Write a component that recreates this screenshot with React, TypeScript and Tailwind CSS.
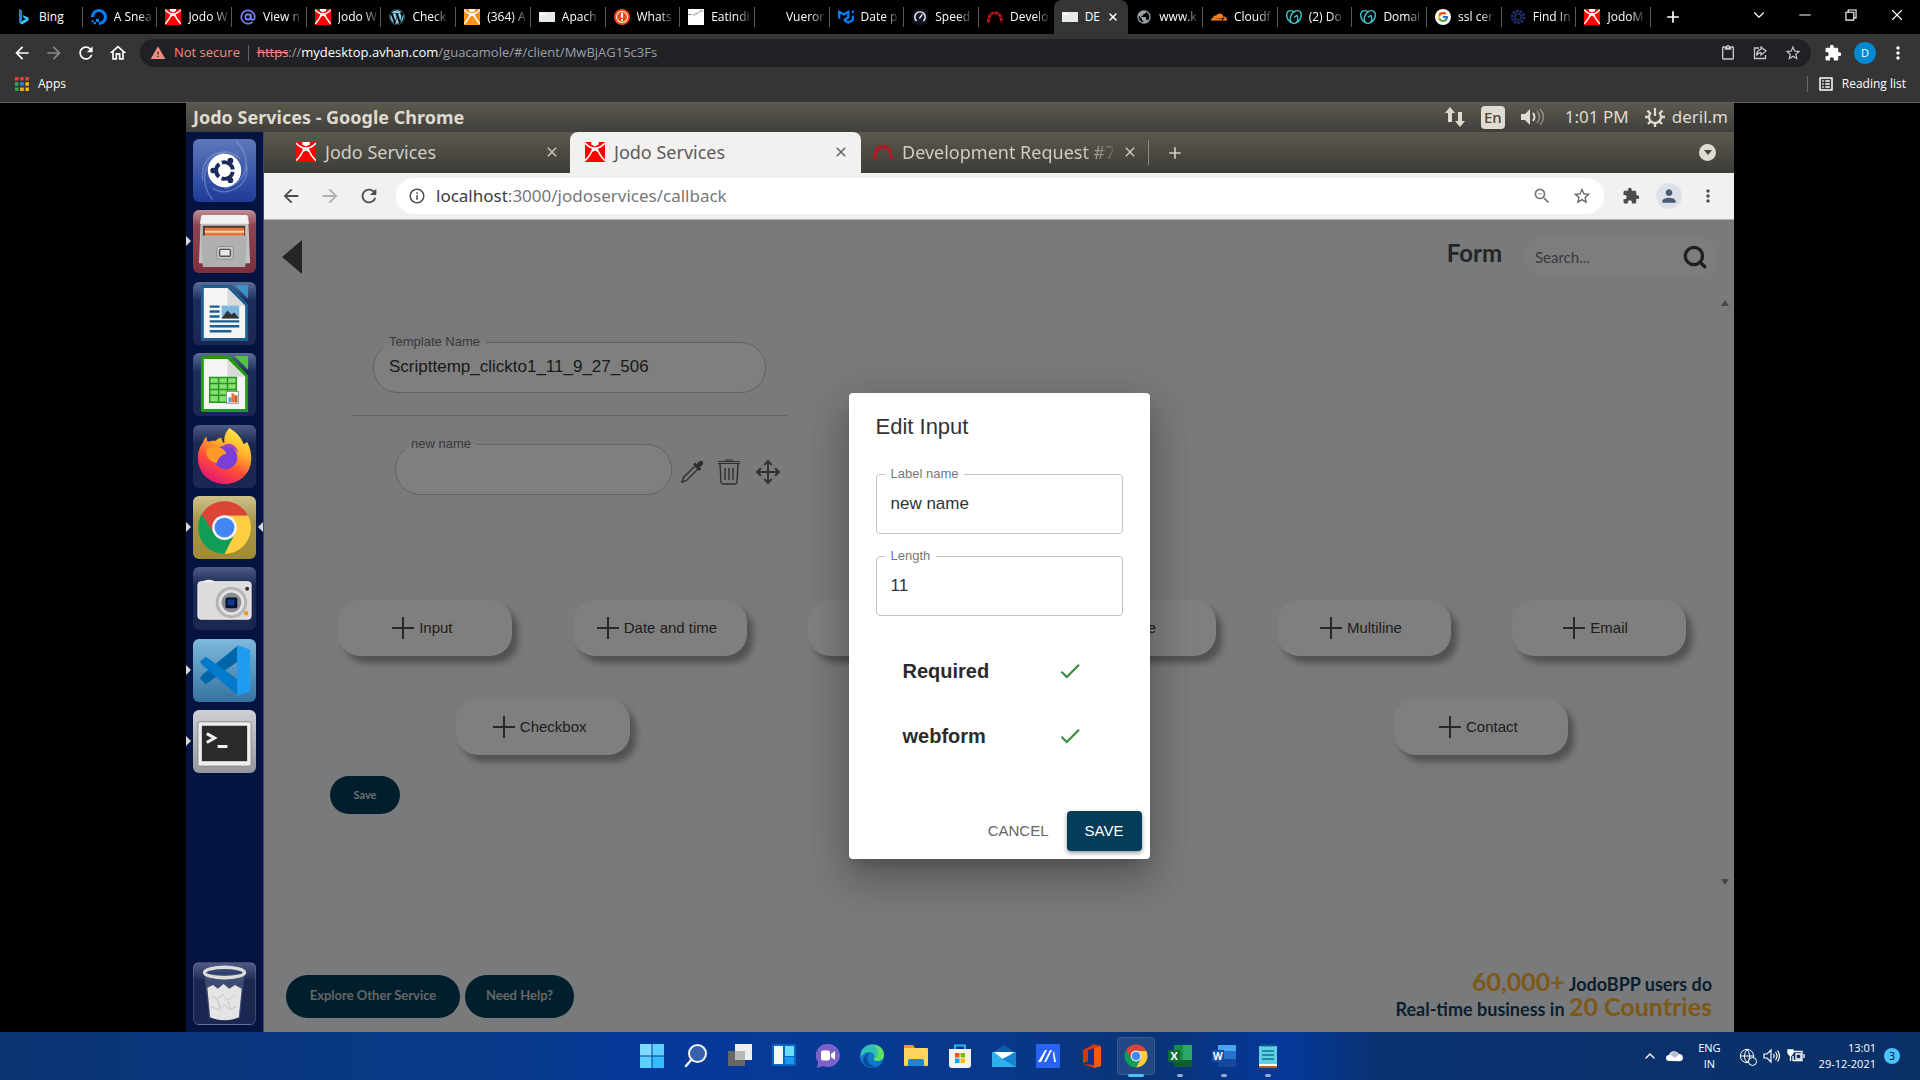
import React from "react";
import {
  MdArrowBack, MdArrowForward, MdRefresh, MdOutlineHome, MdWarning, MdOutlineContentPaste,
  MdStarBorder, MdExtension, MdMoreVert, MdInfoOutline, MdOutlineZoomOut, MdPerson, MdCheck,
  MdAdd, MdClose, MdOutlineListAlt, MdPublic,
} from "react-icons/md";
import { FaWordpress } from "react-icons/fa";
import { FcGoogle } from "react-icons/fc";
import { SiDigitalocean, SiMui, SiGodaddy, SiCloudflare } from "react-icons/si";
import { AtSign, Minus, ChevronDown, ChevronUp, X, Move, Globe, Search } from "lucide-react";

type SvgProps = { className?: string };

/* ---------- favicons ---------- */

function JodoIcon({ className = "size-4", bg = "#ff0000" }: SvgProps & { bg?: string }) {
  return (
    <svg viewBox="0 0 16 16" className={className} aria-hidden="true">
      <rect width="16" height="16" fill={bg} />
      <path d="M5 0h6v2L8 3.500 5 2z" fill="#fff" />
      <path d="M0 .8 Q4 5 8 5 Q12 5 16 .8" fill="none" stroke="#fff" strokeWidth="1.300" />
      <path d="M6.500 4.500 Q5 10 0 15 M9.500 4.500 Q11 10 16 15" fill="none" stroke="#fff" strokeWidth="1.300" />
      <path d="M6 4.500h4l.6 3H5.400z" fill="#fff" />
      <path d="M8 6.500Q5.500 8 4.500 16h7Q10.500 8 8 6.500z" fill={bg} />
    </svg>
  );
}

function BingIcon() {
  return (
    <svg viewBox="0 0 16 16" className="size-4" aria-hidden="true">
      <path d="M3 0l3 1.2v10L3 13.6z" fill="#2a7de1" />
      <path d="M3 13.4L6 15.6l6.6-4v-3L6.6 6l1.2 3 2 1z" fill="#35c1f1" />
    </svg>
  );
}

function PageIcon() {
  return (
    <svg viewBox="0 0 16 16" className="size-4" aria-hidden="true">
      <rect x="0" y="3" width="16" height="10" fill="#e6e9ea" />
      <path d="M1 4h5v2H1z" fill="#fff" />
    </svg>
  );
}

function AlertIcon() {
  return (
    <svg viewBox="0 0 16 16" className="size-4" aria-hidden="true">
      <circle cx="8" cy="8" r="8" fill="#ff4713" />
      <circle cx="8" cy="8" r="6" fill="#fff" />
      <circle cx="8" cy="8" r="5" fill="#ff4713" />
      <path d="M7 3.800h2v5H7zM7 10h2v2H7z" fill="#fff" />
    </svg>
  );
}

function EatIcon() {
  return (
    <svg viewBox="0 0 16 16" className="size-4" aria-hidden="true">
      <rect width="16" height="16" fill="#fff" />
      <path d="M0 5.500h4M5 5.500l2 1M7 5l3-1M11 4l1-2h3" stroke="#8a8a9a" strokeWidth="1" fill="none" />
    </svg>
  );
}

function SpeedIcon() {
  return (
    <svg viewBox="0 0 16 16" className="size-4" aria-hidden="true">
      <circle cx="8" cy="8" r="8" fill="#141526" />
      <path d="M4.6 12a5.2 5.2 0 1 1 6.8 0" fill="none" stroke="#fff" strokeWidth="1.4" />
      <path d="M7.4 9.4l3-4" stroke="#fff" strokeWidth="1.4" />
    </svg>
  );
}

function RedmineIcon({ className = "size-4" }: SvgProps) {
  return (
    <svg viewBox="0 0 16 16" className={className} aria-hidden="true">
      <path d="M1.5 13.5 Q1.5 3.8 8 3.8 Q14.5 3.8 14.5 13.5" fill="none" stroke="#c1121a" strokeWidth="2.8" strokeDasharray="3.6 0.7" />
    </svg>
  );
}

function SwirlIcon() {
  return (
    <svg viewBox="0 0 16 16" className="size-4" aria-hidden="true">
      <circle cx="8" cy="8" r="5.6" fill="none" stroke="#1d2b66" strokeWidth="3.6" strokeDasharray="2.4 1" />
      <circle cx="8" cy="8" r="3" fill="none" stroke="#2b3f8c" strokeWidth="1" />
    </svg>
  );
}

function ChromeLogo({ className = "size-6" }: SvgProps) {
  return (
    <svg viewBox="0 0 48 48" className={className} aria-hidden="true">
      <path d="M24 13.5h20.5A23 23 0 0 1 24 47l9.1-17.7z" fill="#ffcd40" />
      <path d="M24 24V13.5h20.4A23 23 0 0 0 4.1 12.5l10.8 17z" fill="#db4437" />
      <path d="M4.1 12.5A23 23 0 0 0 24 47l9.1-17.7L24 34l-9-4.6z" fill="#0f9d58" />
      <circle cx="24" cy="24" r="10.8" fill="#f1f1f1" />
      <circle cx="24" cy="24" r="8.6" fill="#4285f4" />
    </svg>
  );
}

/* ---------- outer browser ---------- */

type OuterTab = { title: string; icon: React.ReactNode; active?: boolean };

const outerTabs: OuterTab[] = [
  { title: "Bing", icon: <BingIcon /> },
  { title: "A Snea", icon: <SiDigitalocean className="size-4 text-[#0080ff]" /> },
  { title: "Jodo W", icon: <JodoIcon /> },
  { title: "View n", icon: <AtSign className="size-4 text-[#7b83ff]" strokeWidth={2.5} /> },
  { title: "Jodo W", icon: <JodoIcon /> },
  { title: "Check", icon: <FaWordpress className="size-4 text-[#7fc6e0]" /> },
  { title: "(364) A", icon: <JodoIcon bg="#f7931e" /> },
  { title: "Apach", icon: <PageIcon /> },
  { title: "Whats", icon: <AlertIcon /> },
  { title: "Eatindi", icon: <EatIcon /> },
  { title: "Vueror", icon: <span className="block size-4" /> },
  { title: "Date p", icon: <SiMui className="size-4 text-[#007fff]" /> },
  { title: "Speed", icon: <SpeedIcon /> },
  { title: "Develo", icon: <RedmineIcon /> },
  { title: "DE", icon: <PageIcon />, active: true },
  { title: "www.k", icon: <MdPublic className="size-4 text-[#9aa0a6]" /> },
  { title: "Cloudf", icon: <SiCloudflare className="size-4 text-[#f6821f]" /> },
  { title: "(2) Do", icon: <SiGodaddy className="size-4 text-[#3fc0c8]" /> },
  { title: "Domai", icon: <SiGodaddy className="size-4 text-[#3fc0c8]" /> },
  { title: "ssl cer", icon: <span className="flex size-4 items-center justify-center rounded-full bg-white"><FcGoogle className="size-3" /></span> },
  { title: "Find In", icon: <SwirlIcon /> },
  { title: "JodoM", icon: <JodoIcon /> },
];

function OuterTabItem({ tab, divider }: { tab: OuterTab; divider: boolean }) {
  return (
    <button
      className={
        tab.active
          ? "h-full min-w-0 flex-1 rounded-t-lg bg-[#353535]"
          : "flex h-full min-w-0 flex-1 items-center"
      }
    >
      {tab.active ? (
        <span className="flex items-center gap-[7px] pl-2">
          {tab.icon}
          <span className="whitespace-nowrap">{tab.title}</span>
          <X className="size-3 shrink-0" strokeWidth={3} aria-label="Close tab" />
        </span>
      ) : (
        <span className={divider ? "flex h-5 w-full items-center gap-[7px] border-r border-[#5a5a5a] pl-2" : "flex h-5 w-full items-center gap-[7px] pl-2"}>
          <span className="shrink-0">{tab.icon}</span>
          <span className={tab.title === "Bing" ? "whitespace-nowrap" : "min-w-0 whitespace-nowrap [mask-image:linear-gradient(90deg,#000_65%,#0003)]"}>
            {tab.title}
          </span>
        </span>
      )}
    </button>
  );
}

function OuterBrowser() {
  return (
    <header className="font-['Open_Sans','Noto_Sans',sans-serif] text-xs text-white">
      <div className="flex h-[34px] items-center bg-black pl-2">
        <div className="flex h-full max-w-[1643px] flex-1">
          {outerTabs.map((tab, i) => (
            <OuterTabItem key={i} tab={tab} divider={!outerTabs[i + 1]?.active} />
          ))}
        </div>
        <button aria-label="New tab" className="ml-3"><MdAdd className="size-5" /></button>
        <div className="ml-auto flex items-center gap-7 pr-[14px] pb-1">
          <button aria-label="Search tabs"><ChevronDown className="size-[18px]" strokeWidth={1.5} /></button>
          <button aria-label="Minimize"><Minus className="size-[18px]" strokeWidth={1.5} /></button>
          <button aria-label="Restore">
            <svg viewBox="0 0 16 16" className="size-[18px]" fill="none" stroke="currentColor"><path d="M3.5 5.5h7v7h-7zM5.5 5.5v-2h7v7h-2" /></svg>
          </button>
          <button aria-label="Close"><X className="size-[18px]" strokeWidth={1.5} /></button>
        </div>
      </div>
      <div className="flex h-9 items-center bg-[#353535] pt-[2px] pr-3 pl-3">
        <div className="flex w-32 shrink-0 items-center gap-3">
          <button aria-label="Back"><MdArrowBack className="size-5" /></button>
          <button aria-label="Forward"><MdArrowForward className="size-5 text-[#8a8a8a]" /></button>
          <button aria-label="Reload"><MdRefresh className="size-5" /></button>
          <button aria-label="Home"><MdOutlineHome className="size-5" /></button>
        </div>
        <div className="flex h-7 flex-1 items-center rounded-full bg-[#202124] pr-[9px] pl-[10px]">
          <MdWarning className="size-4 text-[#f28b82]" />
          <span className="ml-2 text-[13px] text-[#f28b82]">Not secure</span>
          <span className="mx-2 h-4 w-px bg-[#5f6368]" />
          <span className="text-[13px] text-[#9aa0a6]">
            <span className="text-[#f28b82] line-through">https</span>://
            <span className="text-white">mydesktop.avhan.com</span>/guacamole/#/client/MwBjAG15c3Fs
          </span>
          <div className="ml-auto flex items-center gap-4 text-[#c4c7c5]">
            <button aria-label="Clipboard"><MdOutlineContentPaste className="size-4" /></button>
            <button aria-label="Share">
              <svg viewBox="0 0 16 16" className="size-4" fill="none" stroke="currentColor" strokeWidth="1.3">
                <path d="M7 3H2.5v10.5h11V10M9 2l5 4-5 4V7.6C6.5 7.6 5.300 8.700 4.500 10.500 4.700 7 6.500 4.800 9 4.400z" />
              </svg>
            </button>
            <button aria-label="Bookmark"><MdStarBorder className="size-[18px]" /></button>
          </div>
        </div>
        <div className="ml-[13px] flex items-center gap-3">
          <button aria-label="Extensions"><MdExtension className="size-[18px]" /></button>
          <button aria-label="Profile" className="size-[22px] rounded-full bg-[#0288d1] text-[11px]">D</button>
          <button aria-label="Menu"><MdMoreVert className="size-5" /></button>
        </div>
      </div>
      <div className="flex h-[33px] items-center border-b border-[#5f5f5f] bg-[#353535] pr-[14px] pb-1 pl-[15px]">
        <button className="flex items-center gap-[9px]">
          <svg viewBox="0 0 14 14" className="size-[14px]" aria-hidden="true">
            <path d="M0 0h3.500v3.500H0zM5.200 0h3.500v3.500H5.200zM10.400 0h3.500v3.500h-3.500z" fill="#ea4335" />
            <path d="M0 5.200h3.500v3.500H0z M0 10.400h3.500v3.500H0z" fill="#34a853" />
            <path d="M5.200 5.200h3.500v3.500H5.200z" fill="#1a8cff" />
            <path d="M10.400 5.200h3.500v3.500h-3.500zM5.200 10.400h3.500v3.500H5.200zM10.400 10.400h3.500v3.500h-3.500z" fill="#fbbc04" />
          </svg>
          Apps
        </button>
        <button className="ml-auto flex h-4 items-center gap-[7px] border-l border-[#6a6a6a] pl-[9px]">
          <MdOutlineListAlt className="size-[18px]" />
          Reading list
        </button>
      </div>
    </header>
  );
}

/* ---------- launcher ---------- */

const docIcon = (dark: string, light: string, inner: React.ReactNode) => (
  <svg viewBox="0 0 64 64" className="size-full" aria-hidden="true">
    <path d="M10 3h28l18 20v37H10a2 2 0 0 1-2-2V5a2 2 0 0 1 2-2z" fill={dark} />
    <path d="M42 3h14v14z" fill={light} />
    <path d="M11 6h24l18 18v33H11z" fill="#f4f4f4" />
    <path d="M35 6v18h18z" fill="#d9d9d9" />
    {inner}
  </svg>
);

const launcher: { name: string; tile: string; running?: boolean; focused?: boolean; icon: React.ReactNode }[] = [
  {
    name: "Search your computer", tile: "from-[#5f78ba] to-[#1d3a98]",
    icon: (
      <svg viewBox="0 0 64 64" className="size-full" aria-hidden="true">
        <path d="M10 42C6 18 30 4 48 20M54 24c6 24-20 36-34 26M20 62C6 44 10 20 32 14M44 2c18 20 10 44-12 48" fill="none" stroke="#8fa6dc" strokeOpacity=".5" strokeWidth="1.500" />
        <circle cx="32" cy="32" r="17" fill="#fff" />
        <circle cx="32" cy="32" r="8.500" fill="none" stroke="#1b2a5c" strokeWidth="4" strokeDasharray="14.800 3" strokeDashoffset="-1.500" />
        <circle cx="20.500" cy="32" r="2.900" fill="#1b2a5c" /><circle cx="38" cy="22" r="2.900" fill="#1b2a5c" /><circle cx="38" cy="42" r="2.900" fill="#1b2a5c" />
      </svg>
    ),
  },
  {
    name: "Files", tile: "from-[#c08e97] via-[#8d4450] via-25% to-[#7d2f3d]", running: true,
    icon: (
      <svg viewBox="0 0 64 64" className="size-full" aria-hidden="true">
        <path d="M8 6h48l2 48H6z" fill="#c4c4c4" />
        <path d="M9 5h46l2 9H7z" fill="#f2f2f2" />
        <path d="M10 16h43v12H10z" fill="#4a3a36" />
        <path d="M12 18h40v10H12z" fill="#e8743a" />
        <path d="M12 21h40v2H12z" fill="#fbd3a8" />
        <path d="M8 26h47l-2 32H10z" fill="#b0b0b0" />
        <rect x="24" y="37" width="17" height="13" rx="3" fill="#c9c9c9" stroke="#8c8c8c" />
        <rect x="27" y="40" width="11" height="7" rx="1" fill="#e8e8e8" stroke="#555" strokeWidth="1.500" />
      </svg>
    ),
  },
  {
    name: "LibreOffice Writer", tile: "from-[#5c6e97] via-[#1b2c5c] via-30% to-[#1b2750]",
    icon: docIcon("#1b5f91", "#3a93c8", <>
      <path d="M17 25h10M17 30h10M17 35h10M17 40h30M17 45h30M17 50h22" stroke="#1b5f91" strokeWidth="2.500" />
      <rect x="29" y="24" width="18" height="13" fill="#7db8e0" /><path d="M29 37l6-8 4 4 3-2 5 6z" fill="#333" />
    </>),
  },
  {
    name: "LibreOffice Calc", tile: "from-[#5c6e97] via-[#1b2c5c] via-30% to-[#1b2750]",
    icon: docIcon("#239a12", "#55c23c", <>
      <rect x="17" y="25" width="27" height="25" fill="#8ade78" />
      <path d="M17 25h27v25H17zM26 25v25M35 25v25M17 31h27M17 37h27M17 43h27" fill="none" stroke="#239a12" strokeWidth="1.500" />
      <rect x="34" y="39" width="12" height="12" fill="#fff" stroke="#888" /><path d="M36 50v-5h3v5z" fill="#4aa3e0" /><path d="M39 50v-9h3v9z" fill="#e8743a" /><path d="M42 50v-7h3v7z" fill="#c85a20" />
    </>),
  },
  {
    name: "Firefox", tile: "from-[#4f5d86] via-[#1b2750] via-30% to-[#1b2750]",
    icon: (
      <svg viewBox="0 0 64 64" className="size-full" aria-hidden="true">
        <defs>
          <linearGradient id="ffx" x1="0.800" y1="0" x2="0.300" y2="1">
            <stop offset="0" stopColor="#fff44f" /><stop offset=".35" stopColor="#ffb32c" /><stop offset=".65" stopColor="#ff4f35" /><stop offset="1" stopColor="#e3127a" />
          </linearGradient>
        </defs>
        <path d="M37 3c8 5 13 11 14 16 3 0 4-2 4-2 6 12 6 26-3 35C40 64 18 62 9 48 2 36 5 24 10 18c1-3 2-5 4-6 0 2 0 4 1 5 3-1 6-1 8-1 2-2 4-3 6-3 0 4 3 6 3 6s-2-9 5-16z" fill="url(#ffx)" />
        <circle cx="33" cy="33" r="12" fill="#7a3fd8" />
        <path d="M14 25c8-6 18-2 20 4-6 2-8 4-10 10-8-2-12-8-10-14z" fill="#ff9a2a" />
        <path d="M30 22c6-6 14-2 16 6-4-4-10-6-16-6z" fill="#a13fd0" />
      </svg>
    ),
  },
  {
    name: "Google Chrome", tile: "from-[#cdc18c] via-[#a8954a] via-40% to-[#a08a35]", running: true, focused: true,
    icon: <div className="p-1"><ChromeLogo className="size-[55px]" /></div>,
  },
  {
    name: "Camera", tile: "from-[#4f5d86] via-[#1b2750] via-30% to-[#1b2750]",
    icon: (
      <svg viewBox="0 0 64 64" className="size-full" aria-hidden="true">
        <ellipse cx="16" cy="16" rx="7" ry="3" fill="#e8e8e8" />
        <rect x="5" y="15" width="54" height="38" rx="3" fill="#dcdcdc" stroke="#f4f4f4" />
        <circle cx="39" cy="36" r="16" fill="#b5b5b5" /><circle cx="39" cy="36" r="13" fill="#e2e2e2" /><circle cx="39" cy="36" r="10" fill="#8a8d92" />
        <rect x="33" y="31" width="12" height="11" rx="2" fill="#06102c" /><path d="M35 33h7v6h-7z" fill="#0c3c8e" /><circle cx="55" cy="22" r="2" fill="#333" /><path d="M52 45h4v4h-4z" fill="#f0951d" />
      </svg>
    ),
  },
  {
    name: "Visual Studio Code", tile: "from-[#7fb9dc] to-[#33739f]", running: true,
    icon: (
      <svg viewBox="0 0 64 64" className="size-full" aria-hidden="true">
        <path d="M45 7v16L13 46l-6-6 3-4z" fill="#0065a9" />
        <path d="M45 57V41L13 18l-6 5 3 4z" fill="#007acc" />
        <path d="M45 6l13 5v42l-13 5z" fill="#1f9cf0" />
      </svg>
    ),
  },
  {
    name: "Terminal", tile: "from-[#cfcfd6] to-[#96969f]", running: true,
    icon: (
      <svg viewBox="0 0 64 64" className="size-full" aria-hidden="true">
        <rect x="5" y="12" width="54" height="45" rx="2" fill="#efefef" stroke="#8a8a8a" />
        <rect x="9" y="16" width="46" height="36" fill="#2b2b2b" />
        <path d="M14 24l8 4.500-8 4.500M25 37h10" fill="none" stroke="#f2f2f2" strokeWidth="3" />
      </svg>
    ),
  },
];

function Launcher() {
  return (
    <nav aria-label="Launcher" className="flex w-[78px] shrink-0 flex-col items-center justify-between border-r border-[#2a4d86] bg-[#04133f] py-[7px]">
      <div className="flex h-[634px] flex-col justify-between">
        {launcher.map((item) => (
          <div key={item.name} className={"relative size-[63px] rounded-md bg-linear-to-b " + item.tile}>
            <button aria-label={item.name} className="block size-full">{item.icon}</button>
            {item.running && <span className="absolute top-[26px] -left-[7px] size-0 border-y-[5px] border-l-[5px] border-y-transparent border-l-[#d8d8d8]" />}
            {item.focused && <span className="absolute top-[26px] -right-[7px] size-0 border-y-[5px] border-r-[5px] border-y-transparent border-r-[#d8d8d8]" />}
          </div>
        ))}
      </div>
      <button aria-label="Trash" className="size-[63px] rounded-md border border-white/15 bg-linear-to-b from-[#4f5d86] via-[#1b2750] via-30% to-[#1b2750]">
        <svg viewBox="0 0 64 64" className="size-full" aria-hidden="true">
          <path d="M11 12h42l-5 46H16z" fill="#8fa0bd" fillOpacity=".3" />
          <path d="M14 26l6-3 5 4 6-5 6 5 6-4 7 4-3 30c-8 4-22 4-30 0z" fill="#e4e4e4" />
          <path d="M18 34l6 4 6-5 5 6 8-5M18 46l8 3 6-5 6 5 7-4M25 38l2 10M36 40l2 9" fill="none" stroke="#c4c4c4" />
          <ellipse cx="32" cy="10" rx="21" ry="5.500" fill="none" stroke="#dcdcdc" strokeWidth="3.500" />
        </svg>
      </button>
    </nav>
  );
}

/* ---------- remote desktop ---------- */

function PanelBar() {
  return (
    <div className="flex h-[29px] items-center bg-linear-to-b from-[#5b594e] to-[#403f3b] pr-[6px] pb-px pl-[7px] text-[#dfdbd2]">
      <h1 className="text-lg leading-6 font-bold">Jodo Services - Google Chrome</h1>
      <div className="ml-auto flex items-center text-[17px] leading-6">
        <svg viewBox="0 0 22 20" className="size-[22px]" fill="currentColor" aria-hidden="true">
          <path d="M6 0l5 6H8v9H4V6H1zM16 20l-5-6h3V5h4v9h3z" />
        </svg>
        <span className="ml-[15px] flex h-[23px] w-6 items-center justify-center rounded-sm bg-[#dfdbd2] text-[15px] font-medium text-[#45443f]">En</span>
        <svg viewBox="0 0 24 20" className="ml-4 h-5 w-6" fill="none" stroke="currentColor" aria-hidden="true">
          <path d="M0 7h4l5-5v16l-5-5H0z" fill="currentColor" stroke="none" />
          <path d="M12 6q3 4 0 8" strokeWidth="2" /><path d="M16 4q5 6 0 12M19 2q7 8 0 16" strokeWidth="1.500" strokeOpacity=".45" />
        </svg>
        <span className="ml-5">1:01 PM</span>
        <svg viewBox="0 0 20 20" className="ml-4 size-5" fill="none" stroke="currentColor" aria-hidden="true">
          <path d="M6 5.500a6 6 0 1 0 8 0M10 1v8" strokeWidth="2.200" />
          <path d="M10 16v4M4 10H0M20 10h-4M5.500 14.500L3 17M14.500 14.500L17 17M4.800 6L2.500 3.500M15.200 6l2.300-2.500" strokeWidth="2.400" />
        </svg>
        <span className="ml-[7px]">deril.m</span>
      </div>
    </div>
  );
}

function InnerBrowserChrome() {
  return (
    <div className="text-lg leading-6">
      <div className="flex h-[41px] items-stretch bg-linear-to-b from-[#5b594e] to-[#3d3c38] text-[#cfccc4]">
        <button className="flex w-[306px] items-center gap-[9px] pr-[10px] pb-[2px] pl-8 text-left">
          <JodoIcon className="size-5" />
          <span className="flex-1">Jodo Services</span>
          <MdClose className="size-4" aria-label="Close tab" />
        </button>
        <button className="flex w-[291px] items-center gap-[9px] rounded-t-lg bg-[#f2f1f0] pr-3 pb-[2px] pl-[15px] text-left text-[#5b5b5b]">
          <JodoIcon className="size-5" />
          <span className="flex-1">Jodo Services</span>
          <MdClose className="size-4" aria-label="Close tab" />
        </button>
        <button className="flex w-[277px] items-center gap-[9px] pb-[2px] pl-3 text-left">
          <RedmineIcon className="size-5 shrink-0" />
          <span className="min-w-0 flex-1 whitespace-nowrap [mask-image:linear-gradient(90deg,#000_85%,#0003)]">Development Request #7</span>
          <MdClose className="size-4 shrink-0" aria-label="Close tab" />
        </button>
        <span className="my-2 ml-[10px] w-px bg-[#8a8880]" />
        <button aria-label="New tab" className="ml-4"><MdAdd className="size-5" /></button>
        <button aria-label="Tab list" className="mr-[18px] ml-auto">
          <span className="flex size-[17px] items-center justify-center rounded-full bg-[#dfdbd2]">
            <span className="border-x-[4px] border-t-[5px] border-x-transparent border-t-[#45443f]" />
          </span>
        </button>
      </div>
      <div className="flex h-[47px] items-center border-b border-[#b6b4b0] bg-[#f2f1f0] pr-4 text-[#4c4c4c]">
        <div className="flex w-[132px] items-center gap-[17px] pl-4">
          <button aria-label="Back"><MdArrowBack className="size-[22px]" /></button>
          <button aria-label="Forward"><MdArrowForward className="size-[22px] text-[#b0b0b0]" /></button>
          <button aria-label="Reload"><MdRefresh className="size-[22px]" /></button>
        </div>
        <div className="flex h-9 flex-1 items-center rounded-full bg-white pr-3 pl-3">
          <MdInfoOutline className="size-[18px]" />
          <span className="ml-[10px] text-[17px] text-[#77777a]"><span className="text-[#3c3c3c]">localhost</span>:3000/jodoservices/callback</span>
          <div className="ml-auto flex items-center gap-5">
            <MdOutlineZoomOut className="size-5 text-[#777]" />
            <MdStarBorder className="size-5 text-[#666]" />
          </div>
        </div>
        <div className="ml-[18px] flex items-center gap-4">
          <button aria-label="Extensions"><MdExtension className="size-[18px]" /></button>
          <button aria-label="Profile" className="flex size-[26px] items-center justify-center rounded-full bg-[#dde1e9] text-[#4d5a75]"><MdPerson className="size-5" /></button>
          <button aria-label="Menu"><MdMoreVert className="size-5" /></button>
        </div>
      </div>
    </div>
  );
}

/* ---------- form page ---------- */

function AddButton({ label }: { label: string }) {
  return (
    <button className="flex h-14 w-[174px] items-center justify-center gap-[5px] rounded-[22px] bg-white pr-[6px] text-[15px] text-[#3c3c3c] shadow-[6px_7px_6px_0_#a4a4a4]">
      <svg viewBox="0 0 22 22" className="size-[22px]" stroke="#4a524f" strokeWidth="2" aria-hidden="true"><path d="M11 0v22M0 11h22" /></svg>
      {label}
    </button>
  );
}

function OutlinedPill({ id, label, value, className }: { id: string; label: string; value: string; className: string }) {
  return (
    <fieldset className={"min-w-0 rounded-[25px] border border-[#c0c2c2] bg-white " + className}>
      <legend className="ml-[9px] px-[6px] text-[13px] leading-4 text-[#737373]">
        <label htmlFor={id}>{label}</label>
      </legend>
      <input id={id} defaultValue={value} className="block h-[42px] w-full bg-transparent px-[15px] pb-2 text-[17px] text-[#353535] outline-none" />
    </fieldset>
  );
}

function FormPage() {
  return (
    <div className="flex flex-1 flex-col bg-[#f2f4f8] pt-[17px] font-['Liberation_Sans',Arial,sans-serif]">
      <div className="flex h-10 items-center pr-4 pl-[18px]">
        <button aria-label="Back">
          <svg viewBox="0 0 20 34" className="h-[34px] w-5" aria-hidden="true"><path d="M20 0v34L0 17z" fill="#484c4c" /></svg>
        </button>
        <h2 className="ml-auto pb-2 font-[Lato,sans-serif] text-2xl font-bold text-[#454a4c]">Form</h2>
        <div className="ml-[23px] flex h-10 w-[193px] items-center rounded-full bg-[#fafafa] pr-[10px] pl-[10px]">
          <label htmlFor="search" className="sr-only">Search</label>
          <input id="search" placeholder="Search..." className="w-0 flex-1 bg-transparent font-[Lato,sans-serif] text-[15px] outline-none placeholder:text-[#757575]" />
          <Search className="size-[26px] text-[#3c4040]" strokeWidth={3} />
        </div>
      </div>

      <div className="mt-[13px] flex flex-1">
        <div className="flex-1 pt-11 pl-11">
          <div className="ml-11 w-[435px]">
            <OutlinedPill id="template" label="Template Name" value="Scripttemp_clickto1_11_9_27_506" className="mx-[21px]" />
            <hr className="mt-[22px] border-[#c6c8ca]" />
            <div className="mt-5 ml-[43px] flex items-center">
              <OutlinedPill id="newname" label="new name" value="" className="w-[277px]" />
              <div className="flex items-center gap-[15px] pt-3 pl-[9px] text-[#5a5e60]">
                <button aria-label="Edit">
                  <svg viewBox="0 0 22 22" className="size-[22px]" fill="none" stroke="currentColor" aria-hidden="true">
                    <path d="M14 5L2.500 16.500 0.800 21.200 5.500 19.500 17 8z" strokeWidth="1.400" />
                    <path d="M12.500 3.500l1.500-1.500 1.500 1.500L18.500.500a2 2 0 0 1 3 3L18.500 6.500 20 8l-1.500 1.500z" fill="currentColor" />
                  </svg>
                </button>
                <button aria-label="Delete">
                  <svg viewBox="0 0 22 26" className="h-[26px] w-[22px]" fill="none" stroke="currentColor" aria-hidden="true">
                    <path d="M0 4.500h22M8 3V1h6v2M0 2.500h22" strokeWidth="1.200" />
                    <path d="M2 5l1 18q.3 2 2 2h12q1.700 0 2-2l1-18M7 9v12M11 9v12M15 9v12" strokeWidth="1.400" />
                  </svg>
                </button>
                <button aria-label="Move"><Move className="size-[26px]" strokeWidth={1.75} /></button>
              </div>
            </div>
          </div>
          <div className="mt-[105px] flex justify-around">
            {["Input", "Date and time", "Number", "Time", "Multiline", "Email"].map((l) => <AddButton key={l} label={l} />)}
          </div>
          <div className="mt-[43px] flex justify-around">
            {["Checkbox", "Dropdown", "Contact"].map((l) => <AddButton key={l} label={l} />)}
          </div>
          <button className="mt-[21px] ml-[22px] h-[38px] w-[70px] rounded-full bg-[#003c58] font-[Lato,sans-serif] text-[11px] font-bold text-[#ddd]">Save</button>
        </div>
        <div className="flex w-[18px] flex-col items-center justify-between pt-[10px] pb-[3px]">
          <span className="border-x-[4px] border-b-[6px] border-x-transparent border-b-[#8e8e8e]" />
          <span className="border-x-[4px] border-t-[6px] border-x-transparent border-t-[#8e8e8e]" />
        </div>
      </div>

      <footer className="flex items-end justify-between pt-[83px] pr-[22px] pb-[11px] pl-[22px] font-[Lato,sans-serif] font-bold">
        <div className="flex gap-[5px] pb-[3px] text-[13px] text-[#ccc]">
          <button className="h-[43px] w-[174px] rounded-full bg-[#003c58] pb-[2px]">Explore Other Service</button>
          <button className="h-[43px] w-[109px] rounded-full bg-[#003c58] pb-[2px]">Need Help?</button>
        </div>
        <p className="text-right text-lg leading-6 text-[#12405c]">
          <span className="text-[25px] leading-5 text-[#fcb02c]">60,000+</span> JodoBPP users do
          <br />
          Real-time business in <span className="text-[25px] leading-5 text-[#fcb02c]">20 Countries</span>
        </p>
      </footer>
    </div>
  );
}

/* ---------- dialog ---------- */

function DialogField({ id, label, value }: { id: string; label: string; value: string }) {
  return (
    <fieldset className="min-w-0 rounded border border-[#c4c4c4]">
      <legend className="ml-2 px-[6px] text-[13px] leading-4 text-[#777]"><label htmlFor={id}>{label}</label></legend>
      <input id={id} defaultValue={value} className="block h-[51px] w-full px-[14px] pb-2 text-[17px] text-[#333] outline-none" />
    </fieldset>
  );
}

function EditDialog() {
  return (
    <div className="absolute inset-0 flex items-center justify-center bg-black/50 font-['Liberation_Sans',Arial,sans-serif]">
      <div role="dialog" aria-labelledby="dlg-title" className="flex w-[301px] flex-col rounded bg-white shadow-[0_11px_15px_-7px_rgba(0,0,0,.2),0_24px_38px_3px_rgba(0,0,0,.14),0_9px_46px_8px_rgba(0,0,0,.12)]">
        <h2 id="dlg-title" className="px-[27px] pt-5 text-[22px] leading-7 text-[#333]">Edit Input</h2>
        <div className="flex flex-col gap-[14px] px-[27px] pt-[25px]">
          <DialogField id="label-name" label="Label name" value="new name" />
          <DialogField id="length" label="Length" value="11" />
        </div>
        <div className="flex flex-col gap-[37px] pt-[41px] pr-[67px] pb-[61px] pl-[54px] text-xl leading-7 font-bold text-[#2b2b2b]">
          {["Required", "webform"].map((t) => (
            <div key={t} className="flex items-center justify-between">
              {t}
              <MdCheck className="size-[26px] text-[#388e3c]" aria-label="yes" />
            </div>
          ))}
        </div>
        <div className="flex items-center justify-end gap-[18px] pr-2 pb-2 text-[15px]">
          <button className="h-10 text-[#666]">CANCEL</button>
          <button className="h-10 w-[75px] rounded bg-[#053c5a] text-white shadow-[0_2px_4px_rgba(0,0,0,.4)]">SAVE</button>
        </div>
      </div>
    </div>
  );
}

/* ---------- windows taskbar ---------- */

const taskIcons: { name: string; state?: "open" | "active"; icon: React.ReactNode }[] = [
  { name: "Start", icon: <><path d="M0 0h11.500v11.500H0z" fill="#7fdcff" /><path d="M12.500 0H24v11.500H12.500z" fill="#5cd0ff" /><path d="M0 12.500h11.500V24H0z" fill="#5cd0ff" /><path d="M12.500 12.500H24V24H12.500z" fill="#35bdfb" /></> },
  { name: "Search", icon: <><circle cx="13.500" cy="9.500" r="8.500" fill="#fff" fillOpacity=".2" stroke="#f2f2f2" strokeWidth="2" /><path d="M7.500 15.500L2 22" stroke="#f2f2f2" strokeWidth="2.500" strokeLinecap="round" /></> },
  { name: "Task view", icon: <><path d="M7 0h17v16H7z" fill="#eee" /><path d="M0 7h17v15H0z" fill="#666" /><path d="M7 7h10v9H7z" fill="#b8b8b8" /></> },
  { name: "Widgets", icon: <><rect width="24" height="22" rx="2" fill="#0a68c4" /><path d="M2 2h9v18H2z" fill="#f4f8fb" /><path d="M13 2h9v10h-9z" fill="#6fdcff" /><path d="M13 13h9v7h-9z" fill="#1c98ee" /></> },
  { name: "Chat", icon: <><path d="M12 0a12 11.500 0 1 1-5 22l-6 2 1.200-5.500A11.500 11.500 0 0 1 12 0z" fill="#7a62c8" /><rect x="5" y="6.500" width="9" height="10" rx="2" fill="#fff" /><path d="M15 10l4-3v9l-4-3z" fill="#fff" /></> },
  { name: "Edge", icon: <><circle cx="12" cy="12" r="12" fill="#1179c9" /><path d="M1 9C4-2 21-3 24 10c0 5-3 7-7 7-3 0-4-1.500-3-3 1.500-3-1-6-5-6-4 0-7 3-8.500 6z" fill="#35c1b1" /><path d="M14 1c6 0 10 5 10 9 0 5-3 7-7 7-2 0-3-1-3-2 6-2 5-10 0-14z" fill="#5ee063" /><path d="M9 9c-4 6 0 14 8 13-5 3-13 1-14-5 0-4 3-7 6-8z" fill="#0c4f9c" /></> },
  { name: "File Explorer", icon: <><path d="M0 1h9l2 3v4H0z" fill="#e0a010" /><rect y="4" width="24" height="18" rx="1" fill="#ffd45c" /><path d="M4 22v-5q0-2 2-2h12q2 0 2 2v5z" fill="#1a86d0" /></> },
  { name: "Store", icon: <><path d="M7 6V1.500h10V6" fill="none" stroke="#2fb4f0" strokeWidth="2" /><path d="M1 5h22v16q0 3-3 3H4q-3 0-3-3z" fill="#f3f3f3" /><path d="M7 9h4.500v4.500H7z" fill="#f25022" /><path d="M12.500 9H17v4.500h-4.500z" fill="#7fba00" /><path d="M7 14.500h4.500V19H7z" fill="#00a4ef" /><path d="M12.500 14.500H17V19h-4.500z" fill="#ffb900" /></> },
  { name: "Mail", icon: <><path d="M0 9L12 1l12 8z" fill="#0d5ea8" /><path d="M0 8h24v15H0z" fill="#2fb0ee" /><path d="M2 8h20L12 16z" fill="#fff" /><path d="M24 8v15L10 15z" fill="#1684d2" /></> },
  { name: "MyASUS", icon: <><path d="M0 0h24v24H0z" fill="#2a62f5" /><path d="M2 18L9 6h2L5 18zM8 18l6-12h2l-6 12zM18 7l2 11h-2l-1-9z" fill="#fff" /></> },
  { name: "Office", icon: <><path d="M3 6l11-6 7 2v20l-7 2-11-4 11 1V4L8 6.500v11L3 19z" fill="#d8350a" /><path d="M14 4l7-2v20l-7 2z" fill="#f05a1a" /></> },
  { name: "Chrome", state: "active", icon: null },
  { name: "Excel", state: "open", icon: <><path d="M6 1h9v22H6z" fill="#178b4a" /><path d="M15 1h9v22h-9z" fill="#2ba868" /><path d="M6 16h18v7H6z" fill="#115c32" /><path d="M0 6h12v12H0z" fill="#0c6a37" /><text x="2.500" y="16" fontSize="11" fontWeight="700" fill="#fff">X</text></> },
  { name: "Word", state: "open", icon: <><path d="M6 1h18v6H6z" fill="#4aa5ee" /><path d="M6 7h18v8H6z" fill="#2672cd" /><path d="M6 15h18v8H6z" fill="#15489c" /><path d="M0 6h12v12H0z" fill="#174fa8" /><text x="1" y="16" fontSize="10" fontWeight="700" fill="#fff">W</text></> },
  { name: "Notepad", state: "open", icon: <><path d="M3 2h18v21H3z" fill="#5fd0e4" /><path d="M6 0v3M9 0v3M12 0v3M15 0v3M18 0v3" stroke="#1c6f86" strokeWidth="1.300" /><path d="M6 7h12M6 11h12M6 15h12" stroke="#14708e" strokeWidth="1.500" /><path d="M3 20h18v2H3z" fill="#fff" /><path d="M3 22h18v2H3z" fill="#b8631c" /></> },
];

function Taskbar() {
  return (
    <footer className="grid h-12 shrink-0 grid-cols-[1fr_auto_1fr] items-center bg-[linear-gradient(90deg,#0a3574_0%,#083a8c_28%,#04389b_33%,#063a96_40%,#08388a_52%,#0a3476_60%,#04389b_67%,#0a3270_72%,#0a3068_100%)] font-['Open_Sans','Noto_Sans',sans-serif] text-[11px] text-white">
      <div />
      <div className="flex">
        {taskIcons.map((t) => (
          <div key={t.name} className="relative flex h-12 w-11 items-center justify-center">
            <button aria-label={t.name} className={t.state === "active" ? "flex size-[38px] items-center justify-center rounded border border-white/10 bg-white/10" : "flex size-[38px] items-center justify-center"}>
              {t.icon ? <svg viewBox="0 0 24 24" className="size-6" aria-hidden="true">{t.icon}</svg> : <ChromeLogo className="size-6" />}
            </button>
            {t.state === "active" && <span className="absolute bottom-[3px] h-[3px] w-4 rounded-full bg-[#4cc2ff]" />}
            {t.state === "open" && <span className="absolute bottom-[3px] h-[3px] w-[6px] rounded-full bg-[#9ba9c6]" />}
          </div>
        ))}
      </div>
      <div className="flex items-center justify-end pr-5">
        <ChevronUp className="size-4" />
        <svg viewBox="0 0 18 12" className="ml-2 h-3 w-[18px]" aria-hidden="true"><path d="M3 11a3 3 0 0 1 0-6 5.500 5.500 0 0 1 10-1 3.700 3.700 0 0 1 1 7.300z" fill="#fff" /><path d="M4 4.500a5 5 0 0 1 9 0L9 8z" fill="#b8bfcc" /></svg>
        <span className="ml-[14px] text-center leading-4">ENG<br />IN</span>
        <span className="relative ml-[18px]"><Globe className="size-4" strokeWidth={1.5} /><span className="absolute -right-0.5 -bottom-0.5 size-[9px] rounded-full border border-white bg-[#0a3068]" /></span>
        <svg viewBox="0 0 18 16" className="ml-2 h-4 w-[18px]" fill="none" stroke="currentColor" strokeWidth="1.200" aria-hidden="true"><path d="M1 6h3l4-4v12l-4-4H1zM10.500 6q1.500 2 0 4M12.500 4q3 4 0 8M14.500 2.500q4 5.500 0 11" /></svg>
        <svg viewBox="0 0 18 16" className="ml-[6px] h-4 w-[18px]" fill="none" stroke="currentColor" strokeWidth="1.300" aria-hidden="true"><path d="M5 3.500h10v9H6V8M17 6v4" /><path d="M1 2h5v3L4.500 7h-2L1 5z" fill="currentColor" /><path d="M3.500 7v6M9 6h5v5H9z" /></svg>
        <span className="ml-[14px] text-right leading-4">13:01<br />29-12-2021</span>
        <span className="ml-2 flex size-4 items-center justify-center rounded-full bg-[#4cc2ff] text-[10px] text-black">3</span>
      </div>
    </footer>
  );
}

export default function App() {
  return (
    <div className="flex min-h-screen flex-col bg-black">
      <OuterBrowser />
      <main className="flex flex-1 flex-col px-[186px] font-['Noto_Sans','Open_Sans',sans-serif]">
        <PanelBar />
        <div className="flex flex-1">
          <Launcher />
          <div className="flex min-w-0 flex-1 flex-col">
            <InnerBrowserChrome />
            <div className="relative flex flex-1 flex-col">
              <FormPage />
              <EditDialog />
            </div>
          </div>
        </div>
      </main>
      <Taskbar />
    </div>
  );
}
